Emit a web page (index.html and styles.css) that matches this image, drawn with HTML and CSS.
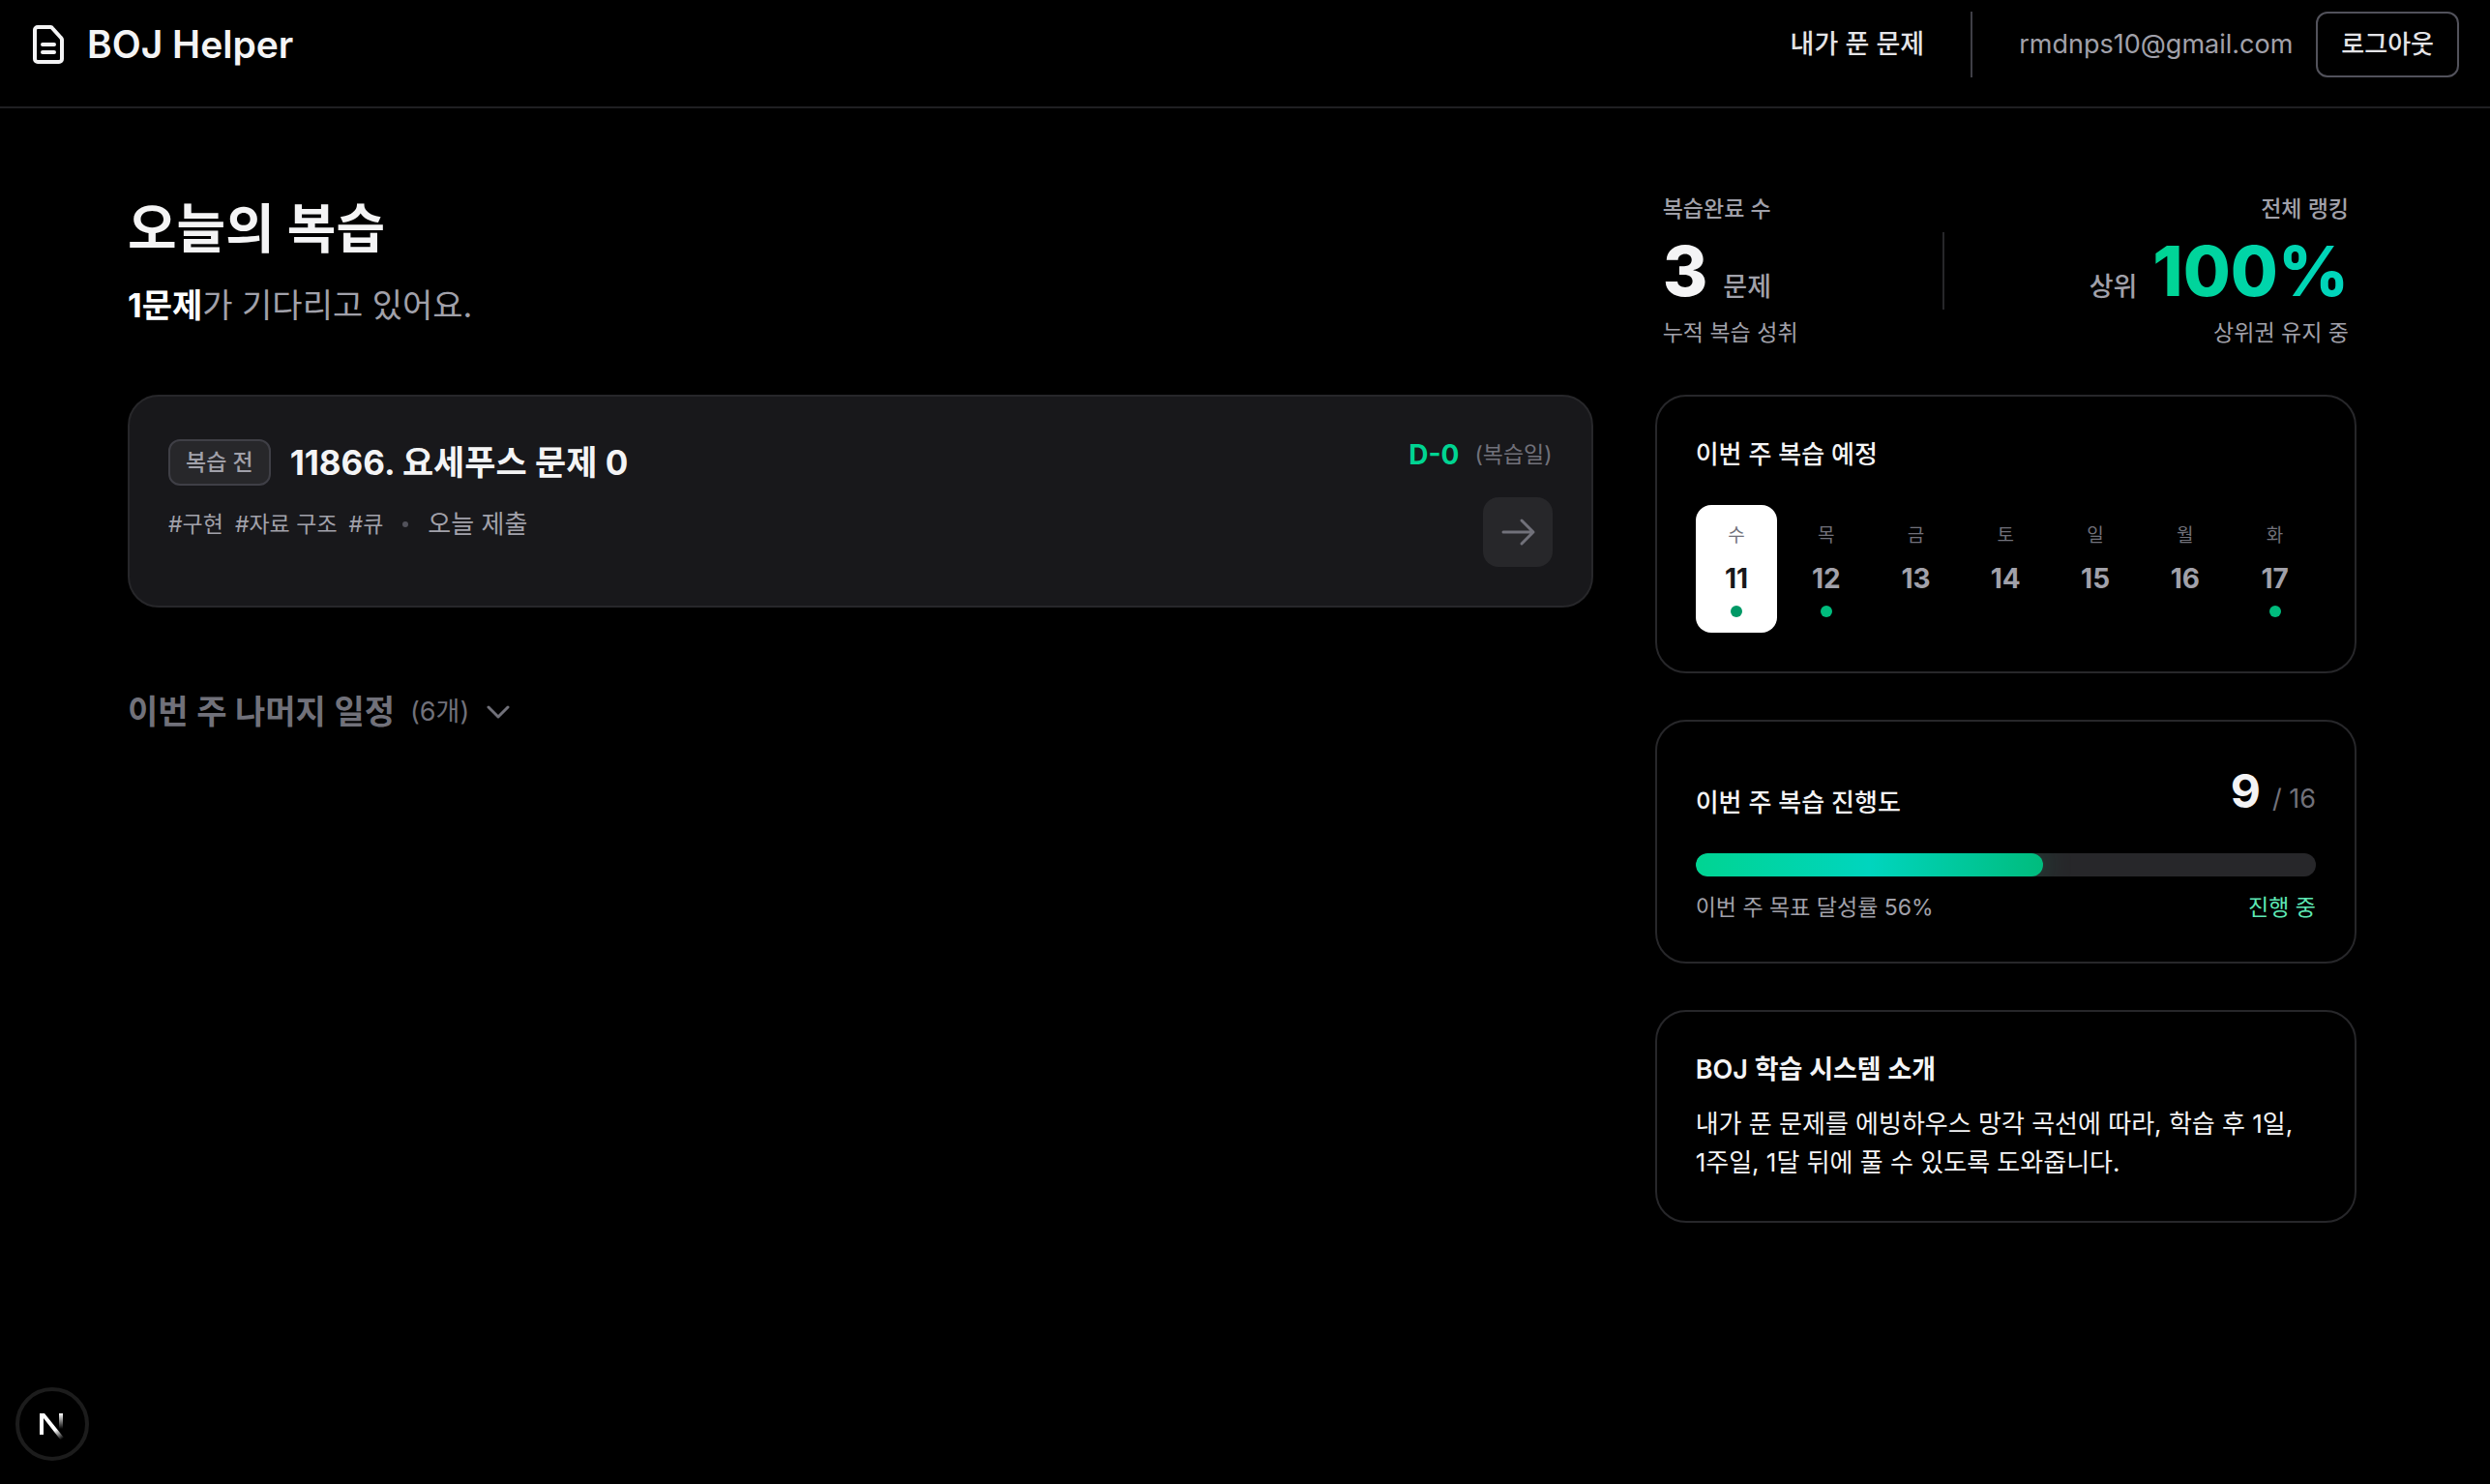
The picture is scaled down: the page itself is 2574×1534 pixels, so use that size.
FILE: index.html
```html
<!DOCTYPE html>
<html lang="ko">
<head>
    <meta charset="UTF-8">
    <meta name="viewport" content="width=device-width, initial-scale=1.0">
    <title>BOJ Helper</title>
    <link rel="stylesheet" href="styles.css">
</head>
<body>
    <header class="header">
        <a class="logo" href="#">
            <svg class="logo-icon" viewBox="0 0 36 48" fill="none" stroke="currentColor" stroke-width="4" stroke-linecap="round" stroke-linejoin="round">
                <path d="M7 6h13a2 2 0 0 1 2 1l9 10a3 3 0 0 1 1 2v20a3 3 0 0 1-3 3H7a3 3 0 0 1-3-3V9a3 3 0 0 1 3-3z"/>
                <path d="M12 24h12M12 32h12"/>
            </svg>
            <span>BOJ Helper</span>
        </a>
        <nav class="nav">
            <a class="nav-link" href="#">내가 푼 문제</a>
            <div class="nav-divider"></div>
            <div class="user">
                <span class="email">rmdnps10@gmail.com</span>
                <button class="logout" type="button">로그아웃</button>
            </div>
        </nav>
    </header>

    <main class="main">
        <section class="reviews">
            <h1 class="page-title">오늘의 복습</h1>
            <p class="subtitle"><strong>1문제</strong>가 기다리고 있어요.</p>

            <article class="problem">
                <div class="problem-info">
                    <div class="problem-head">
                        <span class="badge">복습 전</span>
                        <h2 class="problem-title">11866. 요세푸스 문제 0</h2>
                    </div>
                    <div class="problem-meta">
                        <span class="tag">#구현</span>
                        <span class="tag">#자료 구조</span>
                        <span class="tag">#큐</span>
                        <span class="meta-dot"></span>
                        <span class="submitted">오늘 제출</span>
                    </div>
                </div>
                <div class="problem-side">
                    <p class="due"><strong>D-0</strong><span>(복습일)</span></p>
                    <button class="go" type="button" aria-label="문제 보기">
                        <svg width="40" height="40" viewBox="0 0 40 40" fill="none" stroke="currentColor" stroke-width="3" stroke-linecap="round" stroke-linejoin="round">
                            <path d="M5 20h31M24 8l12 12-12 12"/>
                        </svg>
                    </button>
                </div>
            </article>

            <button class="rest" type="button">
                <span class="rest-title">이번 주 나머지 일정</span>
                <span class="rest-count">(6개)</span>
                <svg width="28" height="28" viewBox="0 0 28 28" fill="none" stroke="currentColor" stroke-width="3" stroke-linecap="round" stroke-linejoin="round">
                    <path d="M4 9l10 10L24 9"/>
                </svg>
            </button>
        </section>

        <aside class="sidebar">
            <div class="stats">
                <div class="stat">
                    <p class="stat-label">복습완료 수</p>
                    <p class="stat-value"><strong>3</strong><span>문제</span></p>
                    <p class="stat-note">누적 복습 성취</p>
                </div>
                <div class="stat-divider"></div>
                <div class="stat stat-right">
                    <p class="stat-label">전체 랭킹</p>
                    <p class="stat-value"><span>상위</span><strong class="rank">100%</strong></p>
                    <p class="stat-note">상위권 유지 중</p>
                </div>
            </div>

            <section class="card">
                <h2 class="card-title">이번 주 복습 예정</h2>
                <ul class="week">
                    <li class="day today"><span class="weekday">수</span><span class="date">11</span><span class="dot"></span></li>
                    <li class="day"><span class="weekday">목</span><span class="date">12</span><span class="dot"></span></li>
                    <li class="day"><span class="weekday">금</span><span class="date">13</span></li>
                    <li class="day"><span class="weekday">토</span><span class="date">14</span></li>
                    <li class="day"><span class="weekday">일</span><span class="date">15</span></li>
                    <li class="day"><span class="weekday">월</span><span class="date">16</span></li>
                    <li class="day"><span class="weekday">화</span><span class="date">17</span><span class="dot"></span></li>
                </ul>
            </section>

            <section class="card">
                <div class="progress-head">
                    <h2 class="card-title">이번 주 복습 진행도</h2>
                    <p class="progress-count"><strong>9</strong><span>/ 16</span></p>
                </div>
                <div class="bar" role="progressbar" aria-label="이번 주 복습 진행도" aria-valuemin="0" aria-valuemax="16" aria-valuenow="9">
                    <div class="bar-fill" style="width: 56%"></div>
                </div>
                <div class="progress-foot">
                    <span>이번 주 목표 달성률 56%</span>
                    <span class="status">진행 중</span>
                </div>
            </section>

            <section class="card">
                <h2 class="card-title intro-title">BOJ 학습 시스템 소개</h2>
                <p class="intro">내가 푼 문제를 에빙하우스 망각 곡선에 따라, 학습 후 1일, 1주일, 1달 뒤에 풀 수 있도록 도와줍니다.</p>
            </section>
        </aside>
    </main>

    <button class="dev-badge" type="button" aria-label="Next.js">
        <svg width="40" height="40" viewBox="0 0 40 40" fill="none">
            <defs>
                <linearGradient id="fade-diagonal" x1="22" y1="21" x2="31" y2="35" gradientUnits="userSpaceOnUse">
                    <stop offset="0.3" stop-color="#fff"/>
                    <stop offset="1" stop-color="#fff" stop-opacity="0"/>
                </linearGradient>
                <linearGradient id="fade-stem" x1="0" y1="9" x2="0" y2="25" gradientUnits="userSpaceOnUse">
                    <stop offset="0" stop-color="#fff"/>
                    <stop offset="1" stop-color="#fff" stop-opacity="0"/>
                </linearGradient>
            </defs>
            <path d="M7 31V9h5l20 25-3 3L11 14v17z" fill="url(#fade-diagonal)"/>
            <path d="M27 9h4v16h-4z" fill="url(#fade-stem)"/>
        </svg>
    </button>
</body>
</html>
```

FILE: styles.css
```css
* {
    box-sizing: border-box;
    margin: 0;
    padding: 0;
}
body {
    min-height: 100vh;
    background-color: #000;
    color: #f4f4f5;
    font-family: Inter, "Noto Sans CJK KR", sans-serif;
    font-size: 26px;
    line-height: 40px;
    word-break: keep-all;
}
button {
    font: inherit;
    color: inherit;
    background: none;
    border: none;
    cursor: pointer;
}
a {
    color: inherit;
    text-decoration: none;
}
ul {
    list-style: none;
}
svg {
    display: block;
}

/* header */
.header {
    display: flex;
    justify-content: space-between;
    align-items: center;
    padding: 12px 32px 30px;
    border-bottom: 2px solid #1f1f22;
}
.logo {
    display: flex;
    align-items: center;
    gap: 22px;
    font-size: 39px;
    font-weight: 600;
}
.logo-icon {
    width: 36px;
    height: 48px;
}
.nav {
    display: flex;
    align-items: center;
    gap: 48px;
}
.nav-link {
    color: #e4e4e7;
    font-size: 27px;
    font-weight: 500;
}
.nav-divider {
    width: 2px;
    height: 68px;
    background-color: #3f3f46;
}
.user {
    display: flex;
    align-items: center;
    gap: 24px;
}
.email {
    color: #a1a1aa;
    font-size: 27px;
}
.logout {
    height: 68px;
    padding: 0 24px;
    border: 2px solid #52525b;
    border-radius: 12px;
    color: #e4e4e7;
    font-weight: 500;
}

/* layout */
.main {
    display: grid;
    grid-template-columns: repeat(12, minmax(0, 1fr));
    gap: 64px;
    padding: 88px 138px 88px 132px;
}
.reviews {
    grid-column: span 8;
}
.sidebar {
    grid-column: span 4;
    display: flex;
    flex-direction: column;
    gap: 48px;
}

/* today */
.page-title {
    font-size: 55px;
    font-weight: 700;
    line-height: 72px;
}
.subtitle {
    margin-top: 20px;
    margin-bottom: 68px;
    color: #a1a1aa;
    font-size: 34px;
    line-height: 48px;
}
.subtitle strong {
    color: #fff;
}
.problem {
    display: flex;
    justify-content: space-between;
    padding: 40px;
    border: 2px solid #27272a;
    border-radius: 32px;
    background-color: #18181b;
}
.problem-head {
    display: flex;
    align-items: center;
    gap: 20px;
    height: 56px;
}
.badge {
    height: 48px;
    padding: 0 16px;
    border: 2px solid #3f3f46;
    border-radius: 12px;
    background-color: #27272a;
    color: #a1a1aa;
    font-size: 23px;
    font-weight: 500;
    line-height: 44px;
}
.problem-title {
    font-size: 35px;
    font-weight: 700;
}
.problem-meta {
    display: flex;
    align-items: center;
    gap: 12px;
    margin-top: 20px;
    color: #a1a1aa;
    line-height: 32px;
}
.tag {
    font-size: 23px;
}
.meta-dot {
    width: 6px;
    height: 6px;
    margin: 0 8px;
    border-radius: 50%;
    background-color: #52525b;
}
.problem-side {
    display: flex;
    flex-direction: column;
    align-items: flex-end;
    gap: 24px;
}
.due {
    display: flex;
    align-items: center;
    gap: 16px;
    height: 40px;
    color: #71717a;
    font-size: 23px;
}
.due strong {
    color: #00d492;
    font-size: 28px;
}
.go {
    display: grid;
    place-items: center;
    width: 72px;
    height: 72px;
    border-radius: 16px;
    background-color: #27272a;
    color: #71717a;
}
.rest {
    display: flex;
    align-items: center;
    gap: 16px;
    height: 48px;
    margin-top: 84px;
    color: #71717a;
    font-size: 27px;
}
.rest-title {
    font-size: 34px;
    font-weight: 600;
}

/* stats */
.stats {
    display: flex;
    justify-content: space-between;
    align-items: center;
    padding: 0 8px;
}
.stat-right {
    text-align: right;
}
.stat-label {
    color: #a1a1aa;
    font-size: 23px;
    font-weight: 500;
    line-height: 32px;
}
.stat-value {
    display: flex;
    align-items: baseline;
    gap: 16px;
    height: 72px;
    margin: 12px 0;
    color: #a1a1aa;
    font-size: 27px;
    font-weight: 500;
    line-height: 72px;
}
.stat-value strong {
    color: #f4f4f5;
    font-size: 71px;
    font-weight: 800;
}
.stat-value .rank {
    background: linear-gradient(90deg, #00d492, #00d5be);
    background-clip: text;
    color: transparent;
}
.stat-note {
    color: #a1a1aa;
    font-size: 23px;
    line-height: 32px;
}
.stat-divider {
    width: 2px;
    height: 80px;
    background-color: #27272a;
}

/* cards */
.card {
    padding: 40px;
    border: 2px solid #27272a;
    border-radius: 32px;
}
.card-title {
    font-size: 26px;
    font-weight: 500;
}
.week {
    display: grid;
    grid-template-columns: repeat(7, minmax(0, 1fr));
    gap: 8px;
    margin-top: 32px;
}
.day {
    display: flex;
    flex-direction: column;
    align-items: center;
    gap: 8px;
    height: 132px;
    padding: 16px 0;
    border-radius: 16px;
    color: #a1a1aa;
}
.weekday {
    color: #71717a;
    font-size: 19px;
    line-height: 32px;
}
.date {
    font-size: 28px;
    font-weight: 700;
}
.dot {
    width: 12px;
    height: 12px;
    border-radius: 50%;
    background-color: #00bc7d;
}
.today {
    background-color: #fff;
    color: #18181b;
}
.today .dot {
    background-color: #009966;
}
.progress-head {
    display: flex;
    justify-content: space-between;
    align-items: flex-end;
    height: 64px;
    margin-bottom: 32px;
}
.progress-count {
    display: flex;
    align-items: baseline;
    align-self: flex-start;
    gap: 12px;
    color: #71717a;
    font-size: 27px;
    line-height: 64px;
}
.progress-count strong {
    color: #f4f4f5;
    font-size: 48px;
}
.bar {
    height: 24px;
    border-radius: 12px;
    background-color: #27272a;
    overflow: hidden;
}
.bar-fill {
    height: 100%;
    border-radius: 12px;
    background: linear-gradient(90deg, #00d492, #00d5be 50%, #00bc7d);
    box-shadow: 0 0 32px rgba(16, 185, 129, 0.3);
}
.progress-foot {
    display: flex;
    justify-content: space-between;
    margin-top: 16px;
    color: #a1a1aa;
    font-size: 23px;
    line-height: 32px;
}
.status {
    color: #5ee9b5;
}
.intro-title {
    margin-bottom: 16px;
    font-size: 27px;
    font-weight: 600;
}

/* dev tools button */
.dev-badge {
    position: fixed;
    left: 16px;
    bottom: 24px;
    display: grid;
    place-items: center;
    width: 76px;
    height: 76px;
    border: 4px solid #1c1c1c;
    border-radius: 50%;
    background-color: #000;
}
```
